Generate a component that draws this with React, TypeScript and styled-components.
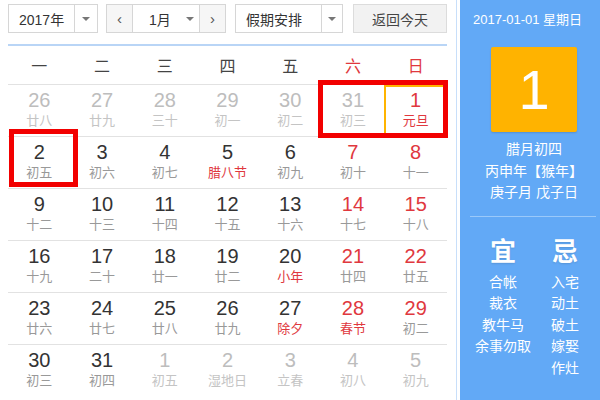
import React from "react";
import styled, { createGlobalStyle } from "styled-components";

const Global = createGlobalStyle`
  html, body { margin: 0; padding: 0; background: #fff; }
  body { font-family: "Liberation Sans", "Noto Sans CJK SC", sans-serif; }
`;

const Page = styled.div`
  position: relative;
  display: flex;
  width: 600px;
  height: 400px;
  overflow: hidden;
`;

const Main = styled.div`
  width: 439px;
  padding-left: 8px;
  display: flex;
  flex-direction: column;
`;

const Toolbar = styled.div`
  display: flex;
  align-items: stretch;
  height: 29px;
  margin-top: 4px;
`;

const Select = styled.div<{ $w: number; $ml?: number }>`
  display: flex;
  width: ${(p) => p.$w}px;
  margin-left: ${(p) => p.$ml ?? 0}px;
  box-sizing: border-box;
  border: 1px solid #d6d6d6;
  background: #fff;
  font-size: 14px;
  color: #333;
`;

const SelLabel = styled.div`
  flex: 1;
  display: flex;
  align-items: center;
  padding-left: 10px;
`;

const Caret = styled.div<{ $w: number; $divider?: boolean }>`
  width: ${(p) => p.$w}px;
  display: flex;
  align-items: center;
  justify-content: center;
  border-left: ${(p) => (p.$divider ? "1px solid #d6d6d6" : "none")};
  &::after {
    content: "";
    border-left: 4px solid transparent;
    border-right: 4px solid transparent;
    border-top: 4px solid #777;
  }
`;

const NavBtn = styled.div<{ $side: "l" | "r" }>`
  width: 25px;
  display: flex;
  align-items: center;
  justify-content: center;
  background: #f6f6f6;
  border-${(p) => (p.$side === "l" ? "right" : "left")}: 1px solid #d6d6d6;
  color: #555;
  font-size: 15px;
`;

const MonthCell = styled.div`
  flex: 1;
  display: flex;
  align-items: center;
  padding-left: 16px;
`;

const TodayBtn = styled.div`
  width: 94px;
  margin-left: 10px;
  box-sizing: border-box;
  border: 1px solid #dcdcdc;
  background: #f2f2f2;
  display: flex;
  align-items: center;
  justify-content: center;
  font-size: 14px;
  color: #444;
`;

const BlueRule = styled.div`
  height: 2px;
  background: #b9d5f6;
  margin-top: 11px;
`;

const Week = styled.div`
  display: grid;
  grid-template-columns: repeat(7, 1fr);
  height: 38px;
  border-bottom: 1px solid #e2e2e2;
`;

const WeekDay = styled.div<{ $red?: boolean }>`
  display: flex;
  align-items: center;
  justify-content: center;
  font-size: 16px;
  color: ${(p) => (p.$red ? "#e0383e" : "#444")};
`;

const Row = styled.div<{ $last?: boolean }>`
  display: grid;
  grid-template-columns: repeat(7, 1fr);
  height: 52px;
  box-sizing: border-box;
  border-bottom: ${(p) => (p.$last ? "none" : "1px solid #e2e2e2")};
`;

const Cell = styled.div<{ $today?: boolean }>`
  display: flex;
  flex-direction: column;
  align-items: center;
  box-sizing: border-box;
  border: ${(p) => (p.$today ? "2px solid #ffb400" : "none")};
  padding-top: ${(p) => (p.$today ? 2 : 4)}px;
`;

const DayNum = styled.div<{ $c: string }>`
  font-size: 20px;
  line-height: 22px;
  color: ${(p) => p.$c};
`;

const Lunar = styled.div<{ $c: string }>`
  font-size: 13px;
  line-height: 18px;
  margin-top: 1px;
  color: ${(p) => p.$c};
`;

const Panel = styled.div`
  width: 140px;
  margin-left: 13px;
  background: #62a9f6;
  box-shadow: -3px 0 0 0 #fff, -4px 0 0 0 #c8dffa;
  padding: 0 4px 0 12px;
  box-sizing: border-box;
  display: flex;
  flex-direction: column;
  color: #fff;
`;

const PanelTitle = styled.div`
  font-size: 13px;
  line-height: 16px;
  margin-top: 12px;
  padding-left: 1px;
`;

const BigBox = styled.div`
  width: 86px;
  height: 85px;
  margin: 19px 0 0 19px;
  background: #ffb300;
  border-radius: 2px;
  box-shadow: 0 1px 2px rgba(0, 0, 0, 0.15);
  display: flex;
  align-items: center;
  justify-content: center;
  font-size: 56px;
  line-height: 1;
`;

const InfoLines = styled.div`
  margin-top: 7px;
  display: flex;
  flex-direction: column;
  align-items: center;
  font-size: 14px;
  line-height: 21.5px;
`;

const PanelRule = styled.div`
  height: 1px;
  background: #9ac9fa;
  margin: 12px 0 0 -2px;
`;

const Columns = styled.div`
  display: grid;
  grid-template-columns: 62px 62px;
  margin-top: 20px;
`;

const Col = styled.div`
  display: flex;
  flex-direction: column;
  align-items: center;
`;

const ColHead = styled.div`
  font-size: 26px;
  font-weight: bold;
  line-height: 30px;
  text-shadow: 0 1px 2px rgba(0, 0, 0, 0.12);
  margin-bottom: 5px;
`;

const ColItem = styled.div`
  font-size: 14px;
  line-height: 21.5px;
`;

const Mark = styled.div<{ $x: number; $y: number; $w: number; $h: number }>`
  position: absolute;
  left: ${(p) => p.$x}px;
  top: ${(p) => p.$y}px;
  width: ${(p) => p.$w}px;
  height: ${(p) => p.$h}px;
  box-sizing: border-box;
  border: 5px solid #f20000;
  pointer-events: none;
`;

type D = { n: number; l: string; other?: boolean; fest?: boolean; today?: boolean };

const rows: D[][] = [
  [
    { n: 26, l: "廿八", other: true },
    { n: 27, l: "廿九", other: true },
    { n: 28, l: "三十", other: true },
    { n: 29, l: "初一", other: true },
    { n: 30, l: "初二", other: true },
    { n: 31, l: "初三", other: true },
    { n: 1, l: "元旦", fest: true, today: true },
  ],
  [
    { n: 2, l: "初五" },
    { n: 3, l: "初六" },
    { n: 4, l: "初七" },
    { n: 5, l: "腊八节", fest: true },
    { n: 6, l: "初九" },
    { n: 7, l: "初十" },
    { n: 8, l: "十一" },
  ],
  [
    { n: 9, l: "十二" },
    { n: 10, l: "十三" },
    { n: 11, l: "十四" },
    { n: 12, l: "十五" },
    { n: 13, l: "十六" },
    { n: 14, l: "十七" },
    { n: 15, l: "十八" },
  ],
  [
    { n: 16, l: "十九" },
    { n: 17, l: "二十" },
    { n: 18, l: "廿一" },
    { n: 19, l: "廿二" },
    { n: 20, l: "小年", fest: true },
    { n: 21, l: "廿四" },
    { n: 22, l: "廿五" },
  ],
  [
    { n: 23, l: "廿六" },
    { n: 24, l: "廿七" },
    { n: 25, l: "廿八" },
    { n: 26, l: "廿九" },
    { n: 27, l: "除夕", fest: true },
    { n: 28, l: "春节", fest: true },
    { n: 29, l: "初二" },
  ],
  [
    { n: 30, l: "初三" },
    { n: 31, l: "初四" },
    { n: 1, l: "初五", other: true },
    { n: 2, l: "湿地日", other: true },
    { n: 3, l: "立春", other: true },
    { n: 4, l: "初八", other: true },
    { n: 5, l: "初九", other: true },
  ],
];

const RED = "#e0383e";

export default function App() {
  const weekdays = ["一", "二", "三", "四", "五", "六", "日"];
  return (
    <Page>
      <Global />
      <Main>
        <Toolbar>
          <Select $w={90}>
            <SelLabel>2017年</SelLabel>
            <Caret $w={22} $divider />
          </Select>
          <Select $w={120} $ml={8}>
            <NavBtn $side="l">‹</NavBtn>
            <MonthCell>1月</MonthCell>
            <Caret $w={18} />
            <NavBtn $side="r">›</NavBtn>
          </Select>
          <Select $w={108} $ml={9}>
            <SelLabel>假期安排</SelLabel>
            <Caret $w={20} $divider />
          </Select>
          <TodayBtn>返回今天</TodayBtn>
        </Toolbar>
        <BlueRule />
        <Week>
          {weekdays.map((w, i) => (
            <WeekDay key={w} $red={i >= 5}>
              {w}
            </WeekDay>
          ))}
        </Week>
        {rows.map((r, ri) => (
          <Row key={ri} $last={ri === rows.length - 1}>
            {r.map((d, ci) => {
              const weekend = ci >= 5;
              const numC = d.other ? "#bdbdbd" : weekend ? RED : "#333";
              const lunC = d.other ? "#c4c4c4" : d.fest ? RED : "#999";
              return (
                <Cell key={ci} $today={d.today}>
                  <DayNum $c={numC}>{d.n}</DayNum>
                  <Lunar $c={lunC}>{d.l}</Lunar>
                </Cell>
              );
            })}
          </Row>
        ))}
      </Main>
      <Panel>
        <PanelTitle>2017-01-01 星期日</PanelTitle>
        <BigBox>1</BigBox>
        <InfoLines>
          <div>腊月初四</div>
          <div>丙申年【猴年】</div>
          <div>庚子月 戊子日</div>
        </InfoLines>
        <PanelRule />
        <Columns>
          <Col>
            <ColHead>宜</ColHead>
            {["合帐", "裁衣", "教牛马", "余事勿取"].map((t) => (
              <ColItem key={t}>{t}</ColItem>
            ))}
          </Col>
          <Col>
            <ColHead>忌</ColHead>
            {["入宅", "动土", "破土", "嫁娶", "作灶"].map((t) => (
              <ColItem key={t}>{t}</ColItem>
            ))}
          </Col>
        </Columns>
      </Panel>
      <Mark $x={318} $y={80} $w={130} $h={58} />
      <Mark $x={9} $y={129} $w={69} $h={58} />
    </Page>
  );
}
